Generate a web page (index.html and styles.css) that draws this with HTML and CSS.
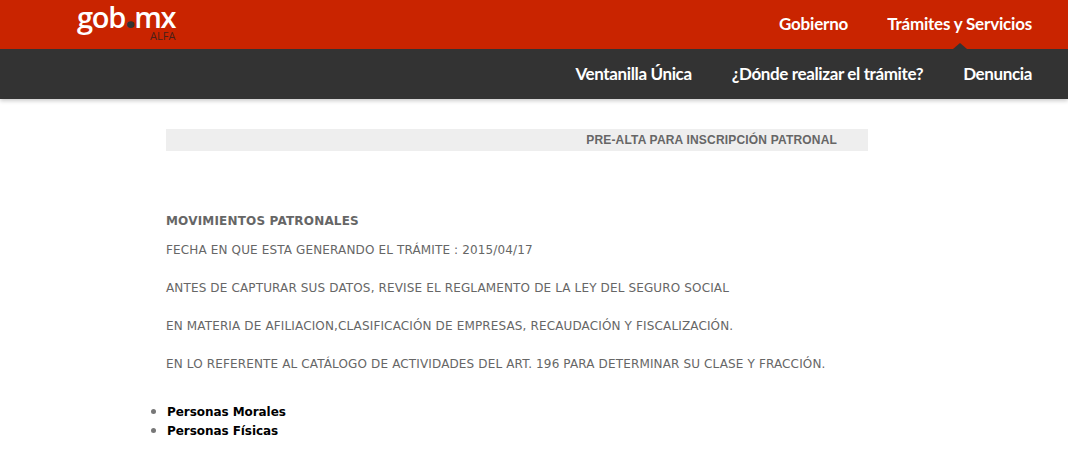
FILE: index.html
```html
<!DOCTYPE html>
<html lang="es">
<head>
    <meta charset="UTF-8">
    <title>Pre-alta para inscripción patronal</title>
    <link rel="stylesheet" href="styles.css">
</head>
<body>

<header class="cabecera">
    <div class="barra-principal">
        <a class="logo" href="#">gob<span class="logo-punto">.</span>mx<span class="logo-alfa">ALFA</span></a>
        <nav class="menu menu-principal">
            <a href="#">Gobierno</a>
            <a class="activo" href="#">Trámites y Servicios</a>
        </nav>
    </div>
    <nav class="menu barra-secundaria">
        <a href="#">Ventanilla Única</a>
        <a href="#">¿Dónde realizar el trámite?</a>
        <a href="#">Denuncia</a>
    </nav>
</header>

<main class="contenido">
    <h1 class="titulo">PRE-ALTA PARA INSCRIPCIÓN PATRONAL</h1>
    <h2 class="subtitulo">MOVIMIENTOS PATRONALES</h2>
    <p class="fecha">FECHA EN QUE ESTA GENERANDO EL TRÁMITE : 2015/04/17</p>
    <p>ANTES DE CAPTURAR SUS DATOS, REVISE EL REGLAMENTO DE LA LEY DEL SEGURO SOCIAL</p>
    <p>EN MATERIA DE AFILIACION,CLASIFICACIÓN DE EMPRESAS, RECAUDACIÓN Y FISCALIZACIÓN.</p>
    <p>EN LO REFERENTE AL CATÁLOGO DE ACTIVIDADES DEL ART. 196 PARA DETERMINAR SU CLASE Y FRACCIÓN.</p>
    <ul class="opciones">
        <li><a href="#">Personas Morales</a></li>
        <li><a href="#">Personas Físicas</a></li>
    </ul>
</main>

</body>
</html>
```

FILE: styles.css
```css
* {
    box-sizing: border-box;
}
body {
    margin: 0;
    background-color: #fff;
    font-family: "DejaVu Sans", Verdana, sans-serif;
    font-size: 12px;
    color: #666;
}
a {
    text-decoration: none;
}
.cabecera {
    box-shadow: 0 2px 4px rgba(0,0,0,0.2);
}
.barra-principal {
    height: 49px;
    background-color: #c92400;
    display: flex;
    justify-content: space-between;
    padding: 0 36px 0 77px;
}
.logo {
    position: relative;
    font-family: "Open Sans", sans-serif;
    font-size: 29px;
    font-weight: 600;
    line-height: 34px;
    letter-spacing: -1.2px;
    color: #fff;
}
.logo-punto {
    color: #333;
    font-size: 36px;
    font-weight: 800;
    line-height: 0;
    letter-spacing: -1.5px;
}
.logo-alfa {
    position: absolute;
    right: 0;
    top: 30px;
    font-size: 11px;
    font-weight: 400;
    line-height: 12px;
    letter-spacing: 0;
    color: #4a2018;
}
.menu {
    display: flex;
    justify-content: flex-end;
    font-family: Lato, sans-serif;
    font-weight: 700;
    font-size: 17px;
    letter-spacing: -0.2px;
}
.menu a {
    color: #fff;
    position: relative;
}
.menu-principal {
    gap: 39px;
    line-height: 48px;
}
.menu-principal .activo::after {
    content: "";
    position: absolute;
    left: 50%;
    bottom: 0;
    margin-left: -7px;
    border-left: 7px solid transparent;
    border-right: 7px solid transparent;
    border-bottom: 6px solid #333;
}
.barra-secundaria {
    height: 50px;
    background-color: #333;
    gap: 40px;
    padding-right: 36px;
    line-height: 50px;
    letter-spacing: -0.37px;
}
.contenido {
    width: 702px;
    margin-left: 166px;
    padding-top: 30px;
}
.titulo {
    margin: 0;
    height: 22px;
    background-color: #eee;
    padding-right: 31px;
    text-align: right;
    font-family: "Liberation Sans", Arial, sans-serif;
    font-size: 12px;
    line-height: 22px;
    font-weight: bold;
    letter-spacing: 0.18px;
    color: #666;
}
.subtitulo {
    margin: 63px 0 0;
    font-size: 12px;
    line-height: 15px;
    font-weight: bold;
    letter-spacing: 0.18px;
    color: #666;
}
p {
    margin: 0 0 23px;
    line-height: 15px;
    letter-spacing: 0.14px;
}
.fecha {
    margin-top: 14px;
}
.opciones {
    margin: 30px 0 0;
    padding-left: 1px;
    list-style-type: disc;
    line-height: 19px;
}
.opciones li {
    height: 19px;
}
.opciones li::marker {
    font-size: 15px;
    color: #777;
}
.opciones a {
    color: #000;
    font-weight: bold;
    letter-spacing: -0.06px;
}
```
